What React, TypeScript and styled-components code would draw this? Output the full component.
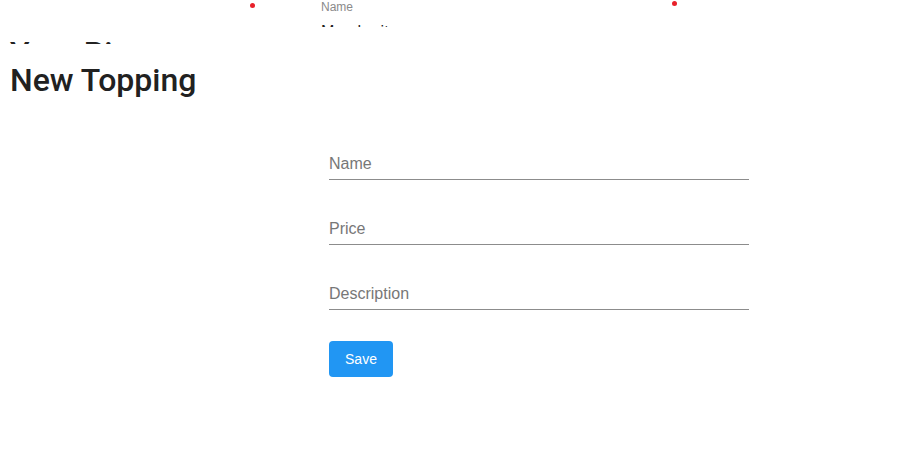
import React from 'react';
import styled, { createGlobalStyle } from 'styled-components';

const GlobalStyle = createGlobalStyle`
  body {
    margin: 0;
    background: #fff;
    font-family: "Liberation Sans", Arial, sans-serif;
  }
`;

const Page = styled.div`
  width: 921px;
  height: 476px;
  overflow: hidden;
`;

const TopRow = styled.div`
  display: flex;
  align-items: flex-start;
  height: 27px;
  overflow: hidden;
  padding-left: 250px;
`;

interface DotProps {
  top: number;
}

const Dot = styled.span<DotProps>`
  display: block;
  width: 5px;
  height: 5px;
  border-radius: 50%;
  background: #e8202a;
  margin-top: ${props => props.top}px;
  flex: none;
`;

const PeekField = styled.div`
  width: 351px;
  margin-left: 66px;
  display: flex;
  flex-direction: column;
`;

const PeekLabel = styled.div`
  font-size: 12px;
  line-height: 14px;
  color: #8a8a8a;
`;

const PeekValue = styled.div`
  font-size: 16px;
  line-height: 20px;
  color: #222;
  margin-top: 8px;
`;

const PeekStrip = styled.div`
  height: 3px;
  margin-top: 14px;
  overflow: hidden;
  padding-left: 10px;
`;

const PeekTitle = styled.div`
  font-family: Roboto, "Noto Sans", sans-serif;
  font-weight: 500;
  font-size: 32px;
  line-height: 32px;
  color: #222;
  margin-top: -4px;
`;

const Title = styled.h1`
  font-family: Roboto, "Noto Sans", sans-serif;
  font-weight: 500;
  font-size: 32px;
  line-height: 38px;
  color: #212121;
  margin: 17px 0 0 10px;
`;

const Form = styled.form`
  width: 420px;
  margin: 42px 0 0 329px;
  display: flex;
  flex-direction: column;
  gap: 26px;
`;

const Input = styled.input`
  display: block;
  width: 100%;
  box-sizing: border-box;
  border: none;
  border-bottom: 1px solid #8c8c8c;
  outline: none;
  padding: 11px 0 4px;
  font-family: "Liberation Sans", Arial, sans-serif;
  font-size: 16px;
  line-height: 23px;
  color: #222;
  background: transparent;

  &::placeholder {
    color: #777;
  }
`;

const SaveButton = styled.button`
  align-self: flex-start;
  width: 64px;
  height: 36px;
  margin-top: 5px;
  border: none;
  border-radius: 4px;
  background: #2196f3;
  color: #fff;
  font-family: "Liberation Sans", Arial, sans-serif;
  font-size: 14px;
  cursor: pointer;
`;

const fields = ['Name', 'Price', 'Description'];

const App = () => {
  return (
    <Page>
      <GlobalStyle />
      <TopRow>
        <Dot top={3} />
        <PeekField>
          <PeekLabel>Name</PeekLabel>
          <PeekValue>Margherita</PeekValue>
        </PeekField>
        <Dot top={1} />
      </TopRow>
      <PeekStrip>
        <PeekTitle>Your Pizza</PeekTitle>
      </PeekStrip>
      <Title>New Topping</Title>
      <Form onSubmit={e => e.preventDefault()}>
        {fields.map(f => (
          <Input key={f} placeholder={f} />
        ))}
        <SaveButton type="submit">Save</SaveButton>
      </Form>
    </Page>
  );
};

export default App;
